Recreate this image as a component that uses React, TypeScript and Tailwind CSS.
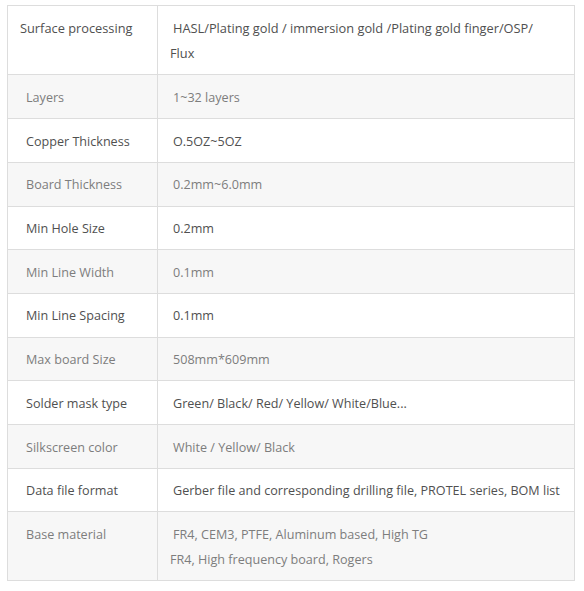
import React from "react";

type Row = { k: string; v: React.ReactNode };

const rows: Row[] = [
  { k: "Surface processing", v: <>HASL/Plating gold / immersion gold /Plating gold finger/OSP/<br />Flux</> },
  { k: "Layers", v: "1~32 layers" },
  { k: "Copper Thickness", v: "O.5OZ~5OZ" },
  { k: "Board Thickness", v: "0.2mm~6.0mm" },
  { k: "Min Hole Size", v: "0.2mm" },
  { k: "Min Line Width", v: "0.1mm" },
  { k: "Min Line Spacing", v: "0.1mm" },
  { k: "Max board Size", v: "508mm*609mm" },
  { k: "Solder mask type", v: "Green/ Black/ Red/ Yellow/ White/Blue..." },
  { k: "Silkscreen color", v: "White / Yellow/ Black" },
  { k: "Data file format", v: "Gerber file and corresponding drilling file, PROTEL series, BOM list" },
  { k: "Base material", v: <>FR4, CEM3, PTFE, Aluminum based, High TG<br />FR4, High frequency board, Rogers</> },
];

export default function App() {
  return (
    <div className="bg-white w-[584px] h-[591px] pt-[5px] pl-[7px]" style={{ fontFamily: '"Open Sans", sans-serif' }}>
      <table className="w-[568px] border-collapse border border-[#dddddd] text-[12.6px] leading-[24.7px] table-fixed">
        <colgroup>
          <col className="w-[150px]" />
          <col />
        </colgroup>
        <tbody>
          {rows.map((r, i) => {
            const odd = i % 2 === 1;
            const first = i === 0;
            const rowCls = odd
              ? "bg-[#f7f7f7] text-[#7d7d7d]"
              : first
              ? "bg-white text-[#505050] text-[12.8px]"
              : "bg-white text-[#505050]";
            const pad = first ? "pt-[10px] pb-[9px]" : "pt-[10.5px] pb-[7.5px]";
            return (
              <tr key={r.k} className={rowCls}>
                <td className={`border border-[#dddddd] ${pad} align-top ${first ? "pl-[12px]" : "pl-[18px]"} pr-[8px]`}>
                  {r.k}
                </td>
                <td className={`border border-[#dddddd] ${pad} pl-[12px] pr-[8px] indent-[3px] align-top whitespace-nowrap`}>
                  {r.v}
                </td>
              </tr>
            );
          })}
        </tbody>
      </table>
    </div>
  );
}
